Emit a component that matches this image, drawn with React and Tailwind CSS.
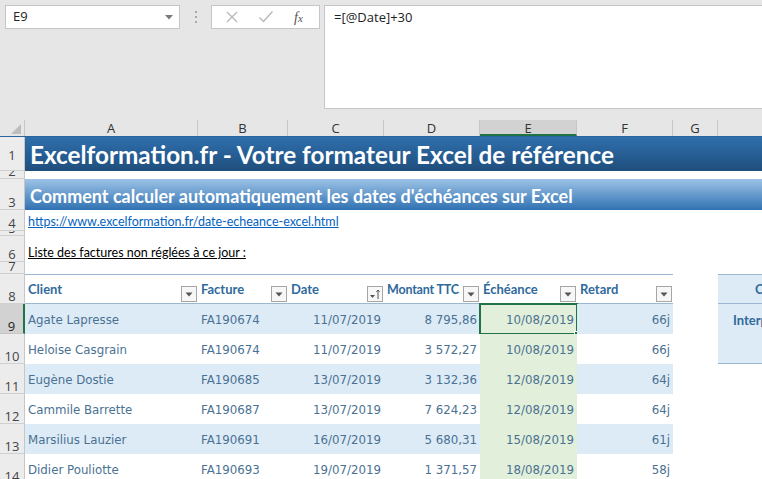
import React from 'react';

const cols = [
  { key: 'A', w: 'w-[173px]' },
  { key: 'B', w: 'w-[90px]' },
  { key: 'C', w: 'w-[96px]' },
  { key: 'D', w: 'w-[96px]' },
  { key: 'E', w: 'w-[97px]' },
  { key: 'F', w: 'w-[96px]' },
  { key: 'G', w: 'w-[45px]' },
];

const rows = [
  ['Agate Lapresse', 'FA190674', '11/07/2019', '8 795,86', '10/08/2019', '66j'],
  ['Heloise Casgrain', 'FA190674', '11/07/2019', '3 572,27', '10/08/2019', '66j'],
  ['Eugène Dostie', 'FA190685', '13/07/2019', '3 132,36', '12/08/2019', '64j'],
  ['Cammile Barrette', 'FA190687', '13/07/2019', '7 624,23', '12/08/2019', '64j'],
  ['Marsilius Lauzier', 'FA190691', '16/07/2019', '5 680,31', '15/08/2019', '61j'],
  ['Didier Pouliotte', 'FA190693', '19/07/2019', '1 371,57', '18/08/2019', '58j'],
];

const RowHead = ({ n, h, active, mid }) => (
  <div
    className={`w-[25px] shrink-0 ${h} overflow-hidden flex ${mid ? 'items-center' : 'items-end'} justify-center border-b border-r font-['Open_Sans',sans-serif] text-[13px] leading-[12px] ${
      active ? 'bg-[#d2d2d2] border-b-[#c6c6c6] border-r-2 border-r-[#217346] text-[#222]' : 'bg-[#ececec] border-b-[#d0d0d0] border-r-[#c6c6c6] text-[#444]'
    }`}
  >
    <span className={mid ? 'pt-[3px]' : 'pb-[1px]'}>{n}</span>
  </div>
);

const FilterBtn = ({ sort }) => (
  <div className="w-[16px] h-[16px] border border-[#a6a6a6] bg-[#f7f7f7] flex items-center justify-center shrink-0">
    {sort ? (
      <svg width="12" height="12" viewBox="0 0 12 12">
        <path d="M1 7h5l-2.5 3z" fill="#555" />
        <path d="M9 2v9M7.3 3.8L9 2l1.7 1.8" stroke="#555" strokeWidth="1" fill="none" />
      </svg>
    ) : (
      <svg width="8" height="5" viewBox="0 0 8 5">
        <path d="M0.5 0.5h7L4 4.5z" fill="#555" />
      </svg>
    )}
  </div>
);

const headers = ['Client', 'Facture', 'Date', 'Montant TTC', 'Échéance', 'Retard'];

export default function App() {
  return (
    <div className="w-[762px] h-[479px] overflow-hidden bg-white font-['Lato','Noto_Sans',sans-serif] text-[#222]">
      {/* toolbar / formula bar */}
      <div className="h-[120px] bg-[#e6e6e6] flex items-start pt-[5px] pl-[5px]">
        <div className="w-[175px] h-[24px] bg-white border border-[#c6c6c6] flex items-center justify-between pl-[7px] pr-[6px] font-['Open_Sans',sans-serif] text-[13px]">
          <span>E9</span>
          <svg width="8" height="5" viewBox="0 0 8 5">
            <path d="M0 0h8L4 4.5z" fill="#7a7a7a" />
          </svg>
        </div>
        <div className="w-[31px] h-[24px] flex flex-col items-center justify-center gap-[3px]">
          <span className="w-[2px] h-[2px] bg-[#a8a8a8]" />
          <span className="w-[2px] h-[2px] bg-[#a8a8a8]" />
          <span className="w-[2px] h-[2px] bg-[#a8a8a8]" />
        </div>
        <div className="w-[109px] h-[24px] bg-white border border-[#c6c6c6] flex items-center">
          <svg width="14" height="14" viewBox="0 0 14 14" className="ml-[13px]">
            <path d="M2 2l10 10M12 2L2 12" stroke="#b8b8b8" strokeWidth="1.4" />
          </svg>
          <svg width="16" height="14" viewBox="0 0 16 14" className="ml-[19px]">
            <path d="M1.5 7.5l4 4 9-10" stroke="#b8b8b8" strokeWidth="1.4" fill="none" />
          </svg>
          <span className="ml-[20px] font-['Liberation_Serif',serif] italic text-[14px] text-[#555]">
            f<span className="text-[11px]">x</span>
          </span>
        </div>
        <div className="ml-[4px] flex-1 h-[104px] bg-white border border-[#c6c6c6] border-r-0 pl-[9px] font-['Open_Sans',sans-serif] text-[13px] leading-[22px]">
          =[@Date]+30
        </div>
      </div>

      {/* column headers */}
      <div className="h-[17px] flex bg-[#e6e6e6] border-b border-[#2a659e] text-[13px] leading-[16px] font-['Open_Sans',sans-serif] text-[#333]">
        <div className="w-[25px] shrink-0 relative border-r border-[#c6c6c6]">
          <svg width="10" height="10" viewBox="0 0 10 10" className="absolute right-[3px] bottom-[2px]">
            <path d="M10 0V10H0z" fill="#bdbdbd" />
          </svg>
        </div>
        {cols.map((c) => (
          <div
            key={c.key}
            className={`${c.w} shrink-0 text-center border-r ${
              c.key === 'E' ? 'bg-[#d2d2d2] border-b-2 border-b-[#217346] border-r-[#c6c6c6]' : 'border-r-[#c6c6c6]'
            }`}
          >
            {c.key}
          </div>
        ))}
        <div className="flex-1" />
      </div>

      {/* row 1 */}
      <div className="flex">
        <RowHead n="1" h="h-[34px]" mid />
        <div className="flex-1 h-[34px] bg-gradient-to-b from-[#2f6fad] to-[#1f4e7c] flex items-end pl-[5px] pb-[1px] overflow-hidden whitespace-nowrap">
          <span className="text-white font-bold text-[24.3px] leading-[30px]">
            Excelformation.fr - Votre formateur Excel de référence
          </span>
        </div>
      </div>
      {/* row 2 */}
      <div className="flex">
        <RowHead n="2" h="h-[8px]" />
        <div className="flex-1" />
      </div>
      {/* row 3 */}
      <div className="flex">
        <RowHead n="3" h="h-[31px]" />
        <div className="flex-1 h-[31px] bg-gradient-to-b from-[#9dc3e6] to-[#2e72b2] flex items-end pl-[5px] pb-[3px] overflow-hidden whitespace-nowrap">
          <span className="text-white font-bold text-[18px] leading-[22px]">
            Comment calculer automatiquement les dates d'échéances sur Excel
          </span>
        </div>
      </div>
      {/* row 4 */}
      <div className="flex">
        <RowHead n="4" h="h-[21px]" />
        <div className="flex-1 h-[21px] flex items-end pl-[3px] pb-[1px] whitespace-nowrap">
          <span className="text-[#0563c1] underline text-[12.5px] leading-[17px]">
            https://www.excelformation.fr/date-echeance-excel.html
          </span>
        </div>
      </div>
      {/* row 5 */}
      <div className="flex">
        <RowHead n="5" h="h-[5px]" />
        <div className="flex-1" />
      </div>
      {/* row 6 */}
      <div className="flex">
        <RowHead n="6" h="h-[26px]" />
        <div className="flex-1 h-[26px] flex items-end pl-[3px] pb-[1px] whitespace-nowrap">
          <span className="text-black underline text-[12.5px] leading-[17px]">
            Liste des factures non réglées à ce jour :
          </span>
        </div>
      </div>
      {/* row 7 */}
      <div className="flex">
        <RowHead n="7" h="h-[12px]" />
        <div className="flex-1" />
      </div>

      {/* row 8: table headers */}
      <div className="flex">
        <RowHead n="8" h="h-[30px]" />
        <div className="flex border-t border-b border-[#9bb7d1] h-[30px]">
          {headers.map((t, i) => (
            <div
              key={t}
              className={`${cols[i].w} shrink-0 flex justify-between pl-[3px] pr-[1px] pb-[1px] font-bold text-[13px] text-[#2f6a9c] whitespace-nowrap`}
            >
              <span className={`pt-[6px] leading-[17px] ${i === 3 ? 'text-[12.5px] tracking-[-0.2px]' : ''}`}>{t}</span>
              <div className="self-end">
                <FilterBtn sort={i === 2} />
              </div>
            </div>
          ))}
        </div>
        <div className="w-[45px] shrink-0" />
        <div className="flex-1 h-[30px] bg-[#ddebf7] border-t border-b border-[#9bb7d1] overflow-hidden whitespace-nowrap">
          <span className="block pl-[37px] pt-[6px] font-bold text-[13px] leading-[17px] text-[#2f6a9c]">Calcul</span>
        </div>
      </div>

      {/* data rows */}
      {rows.map((r, ri) => {
        const band = ri % 2 === 0;
        return (
          <div key={ri} className="flex">
            <RowHead n={String(9 + ri)} h="h-[30px]" active={ri === 0} />
            <div className="flex h-[30px] font-['DejaVu_Sans',sans-serif] text-[11.8px] text-[#4a7192]">
              {r.map((v, ci) => {
                const isE = ci === 4;
                const bg = isE ? 'bg-[#e2efda]' : band ? 'bg-[#ddebf7]' : 'bg-white';
                const align = ci < 2 ? 'justify-start pl-[3px]' : 'justify-end pr-[3px]';
                return (
                  <div key={ci} className={`${cols[ci].w} shrink-0 ${bg} flex items-center pt-[4px] ${align} relative`}>
                    <span>{v}</span>
                    {isE && ri === 0 && (
                      <div className="absolute -left-[1px] -top-[1px] -right-[1px] -bottom-[1px] border-2 border-[#217346]">
                        <div className="absolute -right-[4px] -bottom-[4px] w-[6px] h-[6px] bg-[#217346] border border-white" />
                      </div>
                    )}
                  </div>
                );
              })}
            </div>
            <div className="w-[45px] shrink-0" />
            {ri === 0 && (
              <div className="flex-1 h-[30px] bg-[#ddebf7] overflow-hidden whitespace-nowrap flex items-center pt-[4px]">
                <span className="pl-[15px] font-bold text-[13px] text-[#2f6a9c]">Interprétation</span>
              </div>
            )}
            {ri === 1 && <div className="flex-1 h-[30px] bg-[#ddebf7] border-b border-[#9bb7d1]" />}
          </div>
        );
      })}
    </div>
  );
}
